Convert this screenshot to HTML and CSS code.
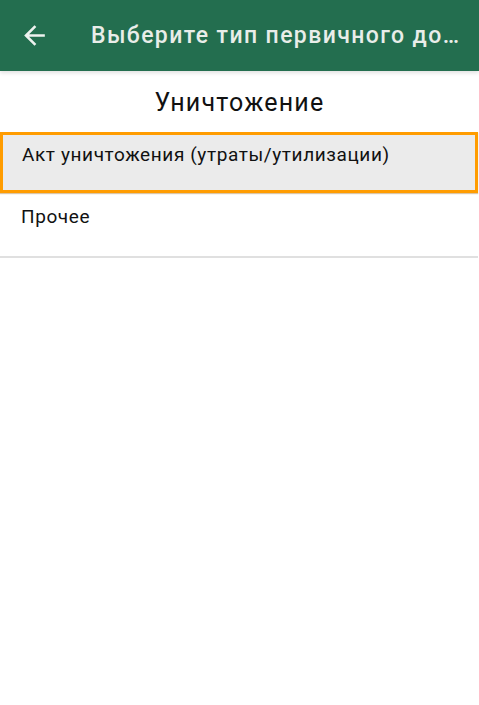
FILE: index.html
```html
<!DOCTYPE html>
<html lang="ru">
<head>
  <meta charset="UTF-8">
  <title>Выберите тип первичного документа</title>
  <meta name="viewport" content="width=device-width, initial-scale=1">
  <link rel="stylesheet" href="styles.css">
</head>
<body>

  <header class="toolbar">
    <button class="back-btn" aria-label="Назад">
      <svg viewBox="0 0 24 24" width="31" height="31">
        <path d="M20 11H7.83l5.59-5.59L12 4l-8 8 8 8 1.41-1.41L7.83 13H20v-2z" fill="currentColor"/>
      </svg>
    </button>
    <h1 class="toolbar-title">Выберите тип первичного документа</h1>
  </header>

  <h2 class="group-title">Уничтожение</h2>

  <ul class="doc-list">
    <li class="doc-item selected">Акт уничтожения (утраты/утилизации)</li>
    <li class="doc-item">Прочее</li>
  </ul>

</body>
</html>
```

FILE: styles.css
```css
* { box-sizing: border-box; }

body {
  font-family: Roboto, "Noto Sans", sans-serif;
  margin: 0;
  background-color: #fff;
  color: #111;
}

.toolbar {
  display: flex;
  align-items: center;
  height: 71px;
  padding: 0 13px 0 19px;
  background-color: #236e4f;
  color: #e9ede9;
  box-shadow: 0 2px 4px rgba(0, 0, 0, 0.12);
}

.back-btn {
  display: flex;
  padding: 0;
  margin: 0 41px 0 0;
  background: none;
  border: none;
  color: #eef2ef;
  cursor: pointer;
}

.toolbar-title {
  flex: 1;
  min-width: 0;
  margin: 0;
  font-size: 23px;
  letter-spacing: 1.4px;
  line-height: 27px;
  font-weight: 500;
  white-space: nowrap;
  overflow: hidden;
  text-overflow: ellipsis;
}

.group-title {
  margin: 18px 0 15px;
  text-align: center;
  font-size: 25px;
  letter-spacing: 1.2px;
  line-height: 28px;
  font-weight: 400;
}

.doc-list {
  list-style: none;
  margin: 0 1px 0 0;
  padding: 0;
  border-bottom: 2px solid #e0e0e0;
}

.doc-item {
  font-size: 19px;
  letter-spacing: 0.6px;
  line-height: 21px;
  height: 63px;
  padding: 13px 21px 0;
}

.doc-item.selected {
  height: 61px;
  padding: 9px 19px 0;
  background-color: #ebebeb;
  border: 3px solid #ff9c00;
  box-shadow: 0 1px 1px rgba(150, 90, 0, 0.35);
}
```
